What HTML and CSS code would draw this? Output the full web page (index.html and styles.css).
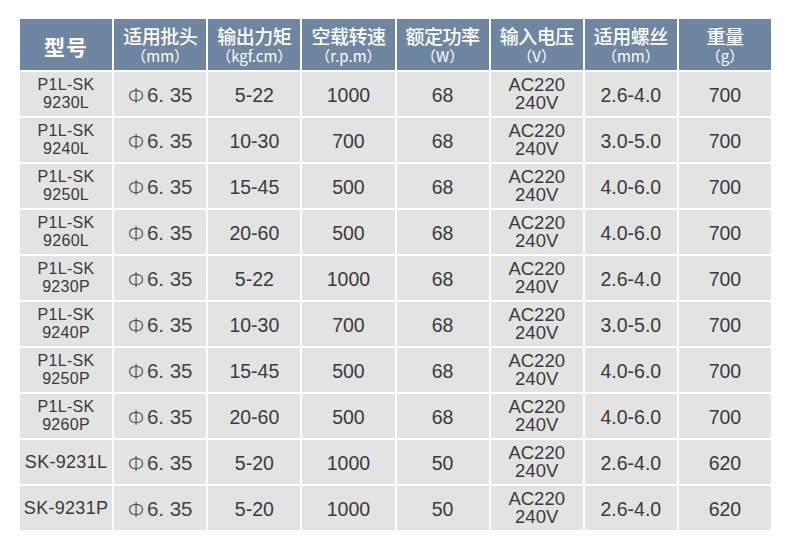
FILE: index.html
```html
<!DOCTYPE html>
<html lang="zh">
<head>
<meta charset="utf-8">
<link rel="stylesheet" href="styles.css">
</head>
<body>
<div class="sheet">
  <div class="grid">
    <div class="th"><span class="big">型号</span></div>
    <div class="th"><span class="t">适用批头</span><span class="u">（mm）</span></div>
    <div class="th"><span class="t">输出力矩</span><span class="u">（kgf.cm）</span></div>
    <div class="th"><span class="t">空载转速</span><span class="u">（r.p.m）</span></div>
    <div class="th"><span class="t">额定功率</span><span class="u">（W）</span></div>
    <div class="th"><span class="t">输入电压</span><span class="u">（V）</span></div>
    <div class="th"><span class="t">适用螺丝</span><span class="u">（mm）</span></div>
    <div class="th"><span class="t">重量</span><span class="u">（g）</span></div>

    <div class="td model">P1L-SK<br>9230L</div><div class="td phi"><span class="sym">Φ</span>6. 35</div><div class="td">5-22</div><div class="td">1000</div><div class="td">68</div><div class="td volt">AC220<br>240V</div><div class="td">2.6-4.0</div><div class="td">700</div>
    <div class="td model">P1L-SK<br>9240L</div><div class="td phi"><span class="sym">Φ</span>6. 35</div><div class="td">10-30</div><div class="td">700</div><div class="td">68</div><div class="td volt">AC220<br>240V</div><div class="td">3.0-5.0</div><div class="td">700</div>
    <div class="td model">P1L-SK<br>9250L</div><div class="td phi"><span class="sym">Φ</span>6. 35</div><div class="td">15-45</div><div class="td">500</div><div class="td">68</div><div class="td volt">AC220<br>240V</div><div class="td">4.0-6.0</div><div class="td">700</div>
    <div class="td model">P1L-SK<br>9260L</div><div class="td phi"><span class="sym">Φ</span>6. 35</div><div class="td">20-60</div><div class="td">500</div><div class="td">68</div><div class="td volt">AC220<br>240V</div><div class="td">4.0-6.0</div><div class="td">700</div>
    <div class="td model">P1L-SK<br>9230P</div><div class="td phi"><span class="sym">Φ</span>6. 35</div><div class="td">5-22</div><div class="td">1000</div><div class="td">68</div><div class="td volt">AC220<br>240V</div><div class="td">2.6-4.0</div><div class="td">700</div>
    <div class="td model">P1L-SK<br>9240P</div><div class="td phi"><span class="sym">Φ</span>6. 35</div><div class="td">10-30</div><div class="td">700</div><div class="td">68</div><div class="td volt">AC220<br>240V</div><div class="td">3.0-5.0</div><div class="td">700</div>
    <div class="td model">P1L-SK<br>9250P</div><div class="td phi"><span class="sym">Φ</span>6. 35</div><div class="td">15-45</div><div class="td">500</div><div class="td">68</div><div class="td volt">AC220<br>240V</div><div class="td">4.0-6.0</div><div class="td">700</div>
    <div class="td model">P1L-SK<br>9260P</div><div class="td phi"><span class="sym">Φ</span>6. 35</div><div class="td">20-60</div><div class="td">500</div><div class="td">68</div><div class="td volt">AC220<br>240V</div><div class="td">4.0-6.0</div><div class="td">700</div>
    <div class="td model1">SK-9231L</div><div class="td phi"><span class="sym">Φ</span>6. 35</div><div class="td">5-20</div><div class="td">1000</div><div class="td">50</div><div class="td volt">AC220<br>240V</div><div class="td">2.6-4.0</div><div class="td">620</div>
    <div class="td model1">SK-9231P</div><div class="td phi"><span class="sym">Φ</span>6. 35</div><div class="td">5-20</div><div class="td">1000</div><div class="td">50</div><div class="td volt">AC220<br>240V</div><div class="td">2.6-4.0</div><div class="td">620</div>
  </div>
</div>
</body>
</html>
```
FILE: styles.css
```css
html, body {
  margin: 0;
  padding: 0;
  background: #ffffff;
}
body {
  width: 790px;
  height: 549px;
  overflow: hidden;
  font-family: "Liberation Sans", "Noto Sans CJK SC", sans-serif;
}
.sheet {
  padding: 19px 19px 0 20px;
}
.grid {
  width: 751px;
  display: grid;
  grid-template-columns: repeat(8, 1fr);
  grid-template-rows: 51px repeat(10, 44px);
  gap: 2px;
  background: #ffffff;
}
.th {
  background: #6e86a2;
  color: #ffffff;
  display: flex;
  flex-direction: column;
  align-items: center;
  justify-content: center;
  font-family: "Noto Sans CJK SC", sans-serif;
}
.th .t {
  display: block;
  font-size: 19px;
  font-weight: 500;
  line-height: 20px;
  letter-spacing: -0.5px;
  white-space: nowrap;
}
.th .u {
  display: block;
  font-size: 15px;
  line-height: 16px;
  margin-top: 2px;
  white-space: nowrap;
}
.th .big {
  font-size: 21px;
  font-weight: 700;
  letter-spacing: 1px;
  margin-top: 3px;
}
.td {
  background: #e3e3e3;
  color: #3a3a3a;
  display: flex;
  align-items: center;
  justify-content: center;
  text-align: center;
  font-size: 19.5px;
  padding-top: 2px;
  box-sizing: border-box;
  white-space: nowrap;
}
.td.model {
  font-size: 16px;
  line-height: 18px;
  letter-spacing: 0.3px;
  padding-top: 0;
}
.td.model1 {
  font-size: 18px;
  letter-spacing: 0.3px;
  padding-top: 0;
}
.td.volt {
  font-size: 18.5px;
  line-height: 18.5px;
  padding-top: 0;
}
.td.phi {
  font-size: 20.5px;
  color: #444444;
}
.td.phi .sym {
  font-family: "Open Sans", "Liberation Sans", sans-serif;
  font-weight: 300;
  font-size: 21px;
  margin-right: 3px;
}
```
